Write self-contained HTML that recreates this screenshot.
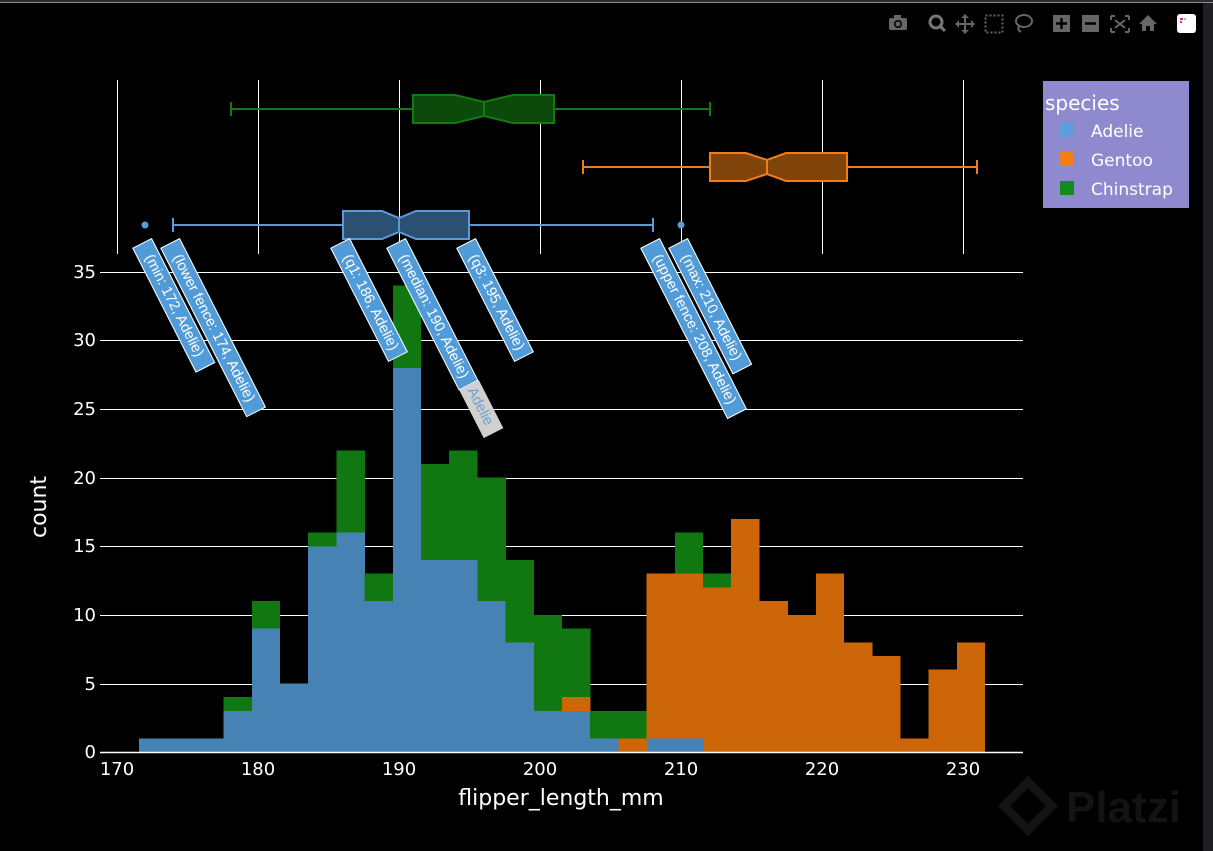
<!DOCTYPE html>
<html><head><meta charset="utf-8"><style>
html,body{margin:0;padding:0;background:#000;width:1213px;height:851px;overflow:hidden;font-family:"Liberation Sans",Arial,sans-serif}
#frame{position:absolute;left:0;top:0;width:1213px;height:851px}
.lab{position:absolute;height:22px;line-height:20px;background:#519bd9;color:#fff;font-size:14.5px;white-space:nowrap;transform-origin:0 50%;transform:rotate(63deg);padding:0 5px 0 13px;border:1px solid #fff;box-sizing:border-box;font-family:"Liberation Sans",Arial,sans-serif}
.gray{position:absolute;height:22px;line-height:22px;background:#d0d0d0;color:#6aa0d6;font-size:14.5px;transform-origin:0 50%;transform:rotate(63deg);padding:0 4px}
</style></head><body>
<svg id="frame" width="1213" height="851" viewBox="0 0 1213 851" xmlns="http://www.w3.org/2000/svg">
<rect x="0" y="0" width="1213" height="851" fill="#000"/>
<rect x="0" y="0" width="1213" height="3" fill="#2b2d31"/>
<rect x="0" y="2" width="1213" height="1" fill="#8a8c90"/>
<rect x="1203" y="3" width="10" height="848" fill="#1e1f22"/>
<g stroke="#fff" stroke-width="1">
<line x1="117.5" y1="80" x2="117.5" y2="254"/>
<line x1="258.5" y1="80" x2="258.5" y2="254"/>
<line x1="399.5" y1="80" x2="399.5" y2="254"/>
<line x1="540.5" y1="80" x2="540.5" y2="254"/>
<line x1="681.5" y1="80" x2="681.5" y2="254"/>
<line x1="822.5" y1="80" x2="822.5" y2="254"/>
<line x1="963.5" y1="80" x2="963.5" y2="254"/>
</g>
<g stroke="#fff" stroke-width="1">
<line x1="100" y1="272.5" x2="1023" y2="272.5"/>
<line x1="100" y1="340.5" x2="1023" y2="340.5"/>
<line x1="100" y1="409.5" x2="1023" y2="409.5"/>
<line x1="100" y1="478.5" x2="1023" y2="478.5"/>
<line x1="100" y1="546.5" x2="1023" y2="546.5"/>
<line x1="100" y1="615.5" x2="1023" y2="615.5"/>
<line x1="100" y1="684.5" x2="1023" y2="684.5"/>
</g>
<g transform="translate(0 752) scale(1 -13.714)" shape-rendering="crispEdges">
<g fill="#4682b4">
<rect x="139" y="0" width="84.8" height="1"/>
<rect x="223.6" y="0" width="28.4" height="3"/>
<rect x="251.8" y="0" width="28.4" height="9"/>
<rect x="280" y="0" width="28.4" height="5"/>
<rect x="308.2" y="0" width="28.4" height="15"/>
<rect x="336.4" y="0" width="28.4" height="16"/>
<rect x="364.6" y="0" width="28.4" height="11"/>
<rect x="392.8" y="0" width="28.4" height="28"/>
<rect x="421" y="0" width="56.6" height="14"/>
<rect x="477.4" y="0" width="28.4" height="11"/>
<rect x="505.6" y="0" width="28.4" height="8"/>
<rect x="533.8" y="0" width="56.6" height="3"/>
<rect x="590.2" y="0" width="28.4" height="1"/>
<rect x="646.6" y="0" width="56.6" height="1"/>
</g>
<g fill="#117711">
<rect x="223.6" y="3" width="28.4" height="1"/>
<rect x="251.8" y="9" width="28.4" height="2"/>
<rect x="308.2" y="15" width="28.4" height="1"/>
<rect x="336.4" y="16" width="28.4" height="6"/>
<rect x="364.6" y="11" width="28.4" height="2"/>
<rect x="392.8" y="28" width="28.4" height="6"/>
<rect x="421" y="14" width="28.4" height="7"/>
<rect x="449.2" y="14" width="28.4" height="8"/>
<rect x="477.4" y="11" width="28.4" height="9"/>
<rect x="505.6" y="8" width="28.4" height="6"/>
<rect x="533.8" y="3" width="28.4" height="7"/>
<rect x="562" y="4" width="28.4" height="5"/>
<rect x="590.2" y="1" width="28.4" height="2"/>
<rect x="618.4" y="1" width="28.4" height="2"/>
<rect x="674.8" y="13" width="28.4" height="3"/>
<rect x="703" y="12" width="28.4" height="1"/>
</g>
<g fill="#cc6609">
<rect x="562" y="3" width="28.4" height="1"/>
<rect x="618.4" y="0" width="28.4" height="1"/>
<rect x="646.6" y="1" width="28.4" height="12"/>
<rect x="674.8" y="1" width="28.4" height="12"/>
<rect x="703" y="0" width="28.4" height="12"/>
<rect x="731.2" y="0" width="28.4" height="17"/>
<rect x="759.4" y="0" width="28.4" height="11"/>
<rect x="787.6" y="0" width="28.4" height="10"/>
<rect x="815.8" y="0" width="28.4" height="13"/>
<rect x="844" y="0" width="28.4" height="8"/>
<rect x="872.2" y="0" width="28.4" height="7"/>
<rect x="900.4" y="0" width="28.4" height="1"/>
<rect x="928.6" y="0" width="28.4" height="6"/>
<rect x="956.8" y="0" width="28.2" height="8"/>
</g>
</g>
<line x1="100" y1="752.5" x2="1023" y2="752.5" stroke="#fff" stroke-width="1.5"/>
<g stroke="#127a12" stroke-width="2" fill="#0b4a0b">
<line x1="231" y1="109" x2="413" y2="109"/><line x1="554" y1="109" x2="710" y2="109"/>
<line x1="231" y1="102" x2="231" y2="116"/><line x1="710" y1="102" x2="710" y2="116"/>
<path d="M413 95 H455 L484 102 L513 95 H554 V123 H513 L484 116 L455 123 H413 Z"/>
<line x1="484" y1="102" x2="484" y2="116"/>
</g>
<g stroke="#f07d1b" stroke-width="2" fill="#80430a">
<line x1="583" y1="167" x2="710" y2="167"/><line x1="847" y1="167" x2="977" y2="167"/>
<line x1="583" y1="160" x2="583" y2="174"/><line x1="977" y1="160" x2="977" y2="174"/>
<path d="M710 153 H746 L767 160 L786 153 H847 V181 H786 L767 174 L746 181 H710 Z"/>
<line x1="767" y1="160" x2="767" y2="174"/>
</g>
<g stroke="#5a9ad6" stroke-width="2" fill="#2c5072">
<line x1="173" y1="225" x2="343" y2="225"/><line x1="469" y1="225" x2="653" y2="225"/>
<line x1="173" y1="218" x2="173" y2="232"/><line x1="653" y1="218" x2="653" y2="232"/>
<path d="M343 211 H382 L399 218 L416 211 H469 V239 H416 L399 232 L382 239 H343 Z"/>
<line x1="399" y1="218" x2="399" y2="232"/>
</g>
<circle cx="145" cy="225" r="3.5" fill="#5a9ad6"/><circle cx="681" cy="225" r="3.5" fill="#5a9ad6"/>
<g fill="#fff" font-size="18" font-family="DejaVu Sans, sans-serif" text-anchor="middle">
<text x="117" y="775">170</text><text x="258" y="775">180</text><text x="399" y="775">190</text>
<text x="540" y="775">200</text><text x="681" y="775">210</text><text x="822" y="775">220</text><text x="963" y="775">230</text>
</g>
<g fill="#fff" font-size="18" font-family="DejaVu Sans, sans-serif" text-anchor="end">
<text x="96" y="278">35</text><text x="96" y="346">30</text><text x="96" y="415">25</text><text x="96" y="484">20</text>
<text x="96" y="552">15</text><text x="96" y="621">10</text><text x="96" y="690">5</text><text x="96" y="758">0</text>
</g>
<text x="561" y="805" fill="#fff" font-size="22" font-family="DejaVu Sans, sans-serif" text-anchor="middle">flipper_length_mm</text>
<text x="0" y="0" transform="translate(46 507) rotate(-90)" fill="#fff" font-size="22" font-family="DejaVu Sans, sans-serif" text-anchor="middle">count</text>
<rect x="1043" y="81" width="146" height="127" fill="#8f89cf"/>
<g font-family="DejaVu Sans, Liberation Sans, sans-serif" fill="#fff">
<text x="1045" y="110" font-size="20">species</text>
<rect x="1060" y="123" width="14" height="14" fill="#5a9fdc"/><text x="1091" y="137" font-size="17">Adelie</text>
<rect x="1060" y="152" width="14" height="14" fill="#f47d16"/><text x="1091" y="166" font-size="17">Gentoo</text>
<rect x="1060" y="181" width="14" height="14" fill="#128a1e"/><text x="1091" y="195" font-size="17">Chinstrap</text>
</g>
<g fill="#666">
<rect x="889" y="18" width="18" height="12" rx="2"/><circle cx="898" cy="24" r="4" fill="#000"/><circle cx="898" cy="24" r="2.5" fill="#666"/><rect x="894" y="15" width="7" height="4"/>
<circle cx="936" cy="22" r="6" fill="none" stroke="#777" stroke-width="3"/><line x1="940" y1="26" x2="945" y2="31" stroke="#777" stroke-width="3"/>
<path d="M965 14 L969 18 H966 V23 H971 V20 L975 24 L971 28 V25 H966 V30 H969 L965 34 L961 30 H964 V25 H959 V28 L955 24 L959 20 V23 H964 V18 H961 Z"/>
<rect x="985.5" y="15.5" width="17" height="17" fill="none" stroke="#666" stroke-width="2" stroke-dasharray="2 2"/>
<ellipse cx="1024" cy="21" rx="8" ry="6" fill="none" stroke="#666" stroke-width="2"/><path d="M1019 26 q-2 4 2 6" fill="none" stroke="#666" stroke-width="2"/>
<rect x="1053" y="15" width="17" height="17"/><path d="M1056 23.5 h11 M1061.5 18 v11" stroke="#000" stroke-width="2.5"/>
<rect x="1082" y="15" width="17" height="17"/><path d="M1085 23.5 h11" stroke="#000" stroke-width="2.5"/>
<path d="M1111 16 h4 M1111 16 v4 M1129 16 h-4 M1129 16 v4 M1111 32 h4 M1111 32 v-4 M1129 32 h-4 M1129 32 v-4 M1115 20 l10 8 M1125 20 l-10 8" stroke="#666" stroke-width="2" fill="none"/>
<path d="M1148 15 L1157 24 H1154 V31 H1150 V26 H1146 V31 H1142 V24 H1139 Z"/>
</g>
<rect x="1177" y="14" width="19" height="19" rx="3" fill="#fff"/>
<rect x="1180" y="18" width="3" height="2" fill="#e0287a"/><rect x="1184" y="18" width="2" height="2" fill="#9bb"/><rect x="1180" y="21" width="2" height="2" fill="#e0287a"/>
<path d="M1028 782 L1052 806 L1028 830 L1004 806 Z" fill="none" stroke="#111411" stroke-width="9"/>
<text x="1066" y="822" fill="#111411" font-size="44" font-family="Liberation Sans, sans-serif" font-weight="bold">Platzi</text>
</svg>
<div class="lab" style="left:142px;top:232px;width:140px">(min: 172, Adelie)</div>
<div class="lab" style="left:170px;top:232px;width:190px">(lower fence: 174, Adelie)</div>
<div class="lab" style="left:340px;top:232px;width:128px">(q1: 186, Adelie)</div>
<div class="lab" style="left:396px;top:232px;width:160px">(median: 190, Adelie)</div>
<div class="gray" style="left:469px;top:374px;width:46px">Adelie</div>
<div class="lab" style="left:466px;top:232px;width:128px">(q3: 195, Adelie)</div>
<div class="lab" style="left:650px;top:232px;width:192px">(upper fence: 208, Adelie)</div>
<div class="lab" style="left:678px;top:232px;width:142px">(max: 210, Adelie)</div>
</body></html>
